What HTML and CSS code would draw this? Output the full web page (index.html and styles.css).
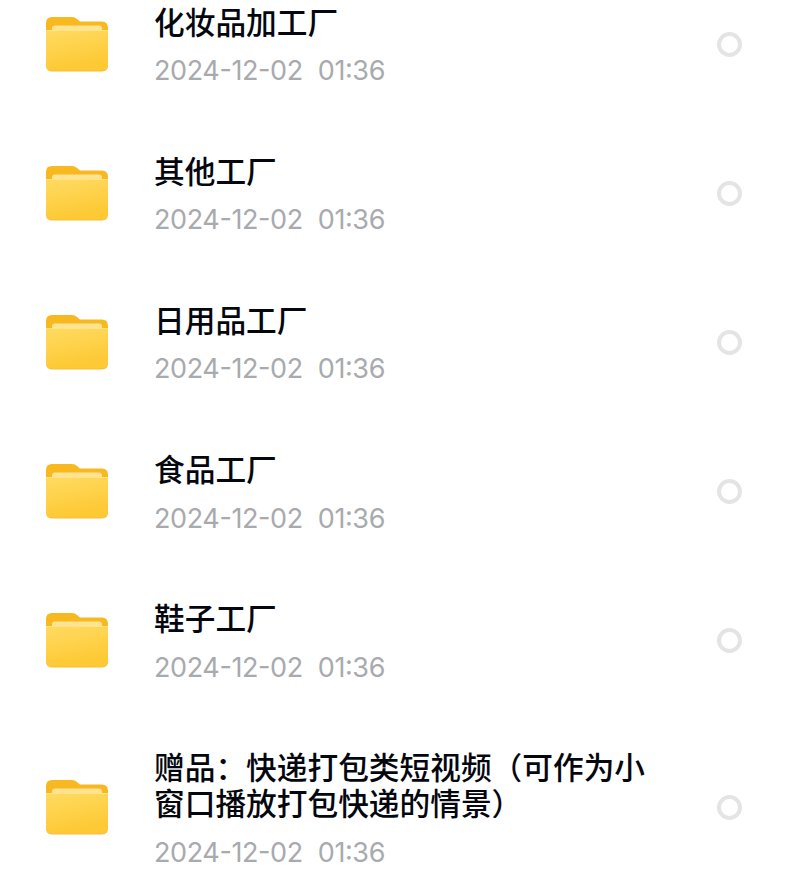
FILE: index.html
```html
<!DOCTYPE html>
<html lang="zh-CN">
<head>
    <meta charset="UTF-8">
    <meta name="viewport" content="width=device-width, initial-scale=1.0">
    <title>文件列表</title>
    <link rel="stylesheet" href="styles.css">
</head>
<body>
    <!-- Shared folder icon -->
    <svg class="defs" width="0" height="0">
        <defs>
            <linearGradient id="front" x1="0" y1="0" x2="0.3" y2="1">
                <stop offset="0" stop-color="#ffdb62"/>
                <stop offset="1" stop-color="#fdc934"/>
            </linearGradient>
            <symbol id="folder" viewBox="0 0 64 58">
                <path d="M1 8Q1 2 7 2H27Q30 2 32 4L35 6.500H57Q63 6.500 63 13V30H1Z" fill="#f8b820"/>
                <rect x="7" y="10.500" width="50" height="12" rx="3" fill="#ffe391"/>
                <path d="M1 15H63V50Q63 56.500 57 56.500H7Q1 56.500 1 50Z" fill="#f6bd35"/>
                <path d="M1 15H63V49.500Q63 55.500 57 55.500H7Q1 55.500 1 49.500Z" fill="url(#front)"/>
                <path d="M1 15.500H63" stroke="#ffe485" stroke-width="1"/>
            </symbol>
        </defs>
    </svg>

    <ul class="file-list" id="fileList"></ul>

    <script>
        const folders = [
            '化妆品加工厂',
            '其他工厂',
            '日用品工厂',
            '食品工厂',
            '鞋子工厂',
            '赠品：快递打包类短视频（可作为小窗口播放打包快递的情景）'
        ];

        document.getElementById('fileList').innerHTML = folders.map(name => `
            <li class="file-row">
                <svg class="folder-icon"><use href="#folder"/></svg>
                <div class="file-info">
                    <h3>${name}</h3>
                    <p><span>2024-12-02</span><span>01:36</span></p>
                </div>
                <span class="radio"></span>
            </li>
        `).join('');
    </script>
</body>
</html>
```
FILE: styles.css
```css
* {
    box-sizing: border-box;
    margin: 0;
    padding: 0;
}

body {
    font-family: Inter, 'Noto Sans CJK SC', sans-serif;
    background: #fff;
}

.defs {
    display: block;
}

.file-list {
    list-style: none;
    padding: 2.6px 48px 0 45px;
}

.file-row {
    display: flex;
    align-items: center;
    margin-bottom: 67.2px;
}

.file-row:last-child {
    margin-bottom: 0;
}

.folder-icon {
    width: 64px;
    height: 58px;
    flex: none;
}

.file-info {
    width: 500px;
    margin-left: 45px;
}

.file-info h3 {
    font-family: 'Noto Sans CJK SC', sans-serif;
    font-size: 30.7px;
    font-weight: 500;
    line-height: 36px;
    color: #05070f;
}

.file-info p {
    display: flex;
    gap: 15px;
    margin-top: 20.4px;
    padding-bottom: 1.6px;
    font-size: 27px;
    line-height: 24px;
    letter-spacing: -0.4px;
    font-feature-settings: 'case';
    color: #a8aaae;
}

.radio {
    width: 25px;
    height: 25px;
    margin: 1px 0 0 auto;
    border: 4px solid #e4e4e4;
    border-radius: 50%;
}
```
